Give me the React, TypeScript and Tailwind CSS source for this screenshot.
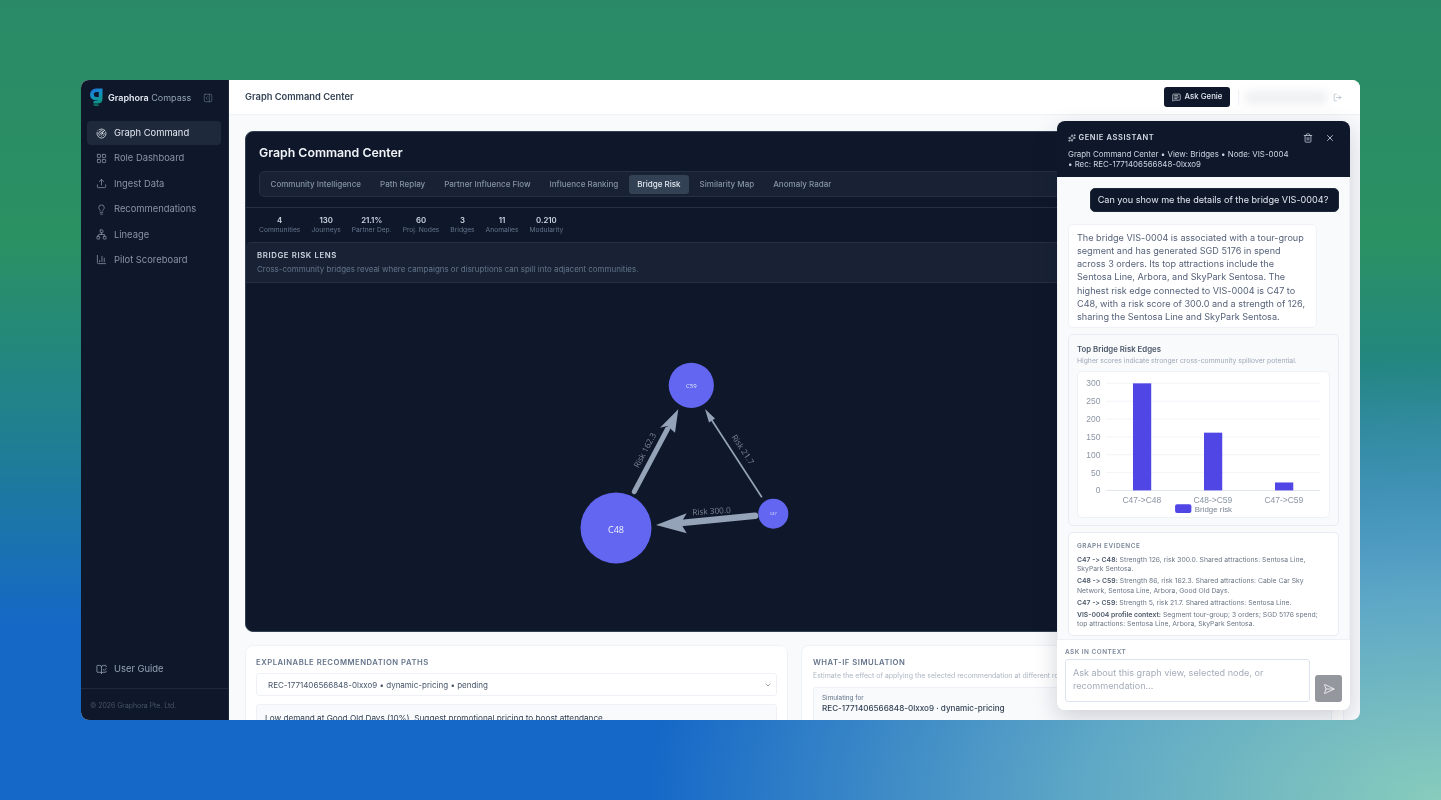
import React from "react";
import { LayoutGrid, Upload, Lightbulb, Network, ChartColumn, BookOpenCheck, PanelRightOpen, MessageSquareText, LogOut, Trash2, X, ChevronDown, SendHorizontal, Sparkles, Radar } from "lucide-react";

const nav = [
  { label: "Graph Command", Icon: Radar, active: true },
  { label: "Role Dashboard", Icon: LayoutGrid },
  { label: "Ingest Data", Icon: Upload },
  { label: "Recommendations", Icon: Lightbulb },
  { label: "Lineage", Icon: Network },
  { label: "Pilot Scoreboard", Icon: ChartColumn },
];
const tabs = ["Community Intelligence", "Path Replay", "Partner Influence Flow", "Influence Ranking", "Bridge Risk", "Similarity Map", "Anomaly Radar"];
const stats = [["4", "Communities"], ["130", "Journeys"], ["21.1%", "Partner Dep."], ["60", "Proj. Nodes"], ["3", "Bridges"], ["11", "Anomalies"], ["0.210", "Modularity"]];
const ticks = [300, 250, 200, 150, 100, 50, 0];

function Logo() {
  return (
    <svg width="13" height="19" viewBox="0 0 13 19" className="shrink-0">
      <defs>
        <linearGradient id="lg" x1="0" y1="0" x2="0.4" y2="1">
          <stop offset="0" stopColor="#1d6fe0" />
          <stop offset="0.55" stopColor="#1593c4" />
          <stop offset="1" stopColor="#0d9488" />
        </linearGradient>
      </defs>
      <path d="M6 0.500a6 6 0 1 0 0 12h3v-3.600H6.300a2.500 2.500 0 1 1 0-5H8.800V11c0 1.300-.8 2-2.200 2H3.500v2.500h4c3.200 0 5-1.700 5-4.600V.500Z" fill="url(#lg)" />
      <path d="M3 16.200h5.500v1.800H4.500Z" fill="#0f766e" />
    </svg>
  );
}

function Graph() {
  return (
    <svg viewBox="0 0 1097 348" className="w-full h-full block font-['Open_Sans',sans-serif]">
      <g fill="#94a3b8" stroke="#94a3b8" strokeLinecap="round">
        <line x1="388.300" y1="208.700" x2="421.500" y2="146" strokeWidth="5" />
        <path d="M432.300 126.300 L 429 149.700 L 421.300 143 L 414 144.700 Z" stroke="none" />
        <line x1="509" y1="232.700" x2="435" y2="240" strokeWidth="6.500" />
        <path d="M410 242 L 440.700 230.300 L 434.700 240.300 L 440.700 250.300 Z" stroke="none" />
        <line x1="515.500" y1="213.700" x2="466" y2="137.500" strokeWidth="1.700" />
        <path d="M459 126 L 469 135.500 L 463 139.500 Z" stroke="none" />
      </g>
      <circle cx="445.300" cy="102.300" r="22.600" fill="#6366f1" />
      <circle cx="370" cy="245" r="35.500" fill="#6366f1" />
      <circle cx="527.300" cy="230.700" r="15" fill="#6366f1" />
      <text x="445.300" y="104.500" textAnchor="middle" fontSize="6" fill="#e0e7ff">C59</text>
      <text x="370" y="249.500" textAnchor="middle" fontSize="9" fill="#eef2ff">C48</text>
      <text x="527.300" y="232" textAnchor="middle" fontSize="3.800" fill="#e0e7ff">C47</text>
      <g fontSize="8.200" fill="#7c8798" textAnchor="middle">
        <text transform="translate(465.700 231) rotate(-3.400)">Risk 300.0</text>
        <text transform="translate(401.500 168.700) rotate(-62)">Risk 162.3</text>
        <text transform="translate(494.500 168) rotate(57)">Risk 21.7</text>
      </g>
    </svg>
  );
}

function Chart() {
  return (
    <div className="mt-[6.500px] h-[147px] rounded-[5px] border border-[#eef2f7] bg-white relative overflow-hidden">
      <svg viewBox="0 0 253 147" className="w-full h-full block font-['Liberation_Sans',sans-serif]">
        {ticks.map((t, i) => (
          <g key={t}>
            <line x1="28" x2="245" y1={11.500 + i * 18.100} y2={11.500 + i * 18.100} stroke={t === 0 ? "#dfe5ee" : "#f1f4f8"} />
            <text x="22" y={14.500 + i * 18.100} textAnchor="end" fontSize="8.600" fill="#8b95a5">{t}</text>
          </g>
        ))}
        <rect x="55" y="11.500" width="18.500" height="108.500" fill="#4f46e5" />
        <rect x="127" y="61.500" width="18.500" height="58.500" fill="#4f46e5" />
        <rect x="199" y="112" width="18.500" height="8" fill="#4f46e5" />
        <g fontSize="8.600" fill="#8b95a5" textAnchor="middle">
          <text x="64" y="132.500">{"C47->C48"}</text>
          <text x="136" y="132.500">{"C48->C59"}</text>
          <text x="208" y="132.500">{"C47->C59"}</text>
        </g>
        <rect x="97.700" y="134" width="16.500" height="9" rx="2" fill="#4f46e5" />
        <text x="117.700" y="141.500" fontSize="8" fill="#7b8696">Bridge risk</text>
      </svg>
    </div>
  );
}

function Evidence({ head, text }: { head: string; text: string }) {
  return (
    <p className="text-[6.800px] leading-[9.500px] text-[#6b7686] mt-[2.500px]">
      <b className="font-semibold text-[#4b5768]">{head}</b> {text}
    </p>
  );
}

function GeniePanel() {
  return (
    <div className="absolute left-[976px] top-[41px] w-[293px] h-[589px] rounded-[8px] bg-white shadow-[0_8px_24px_rgba(15,23,42,0.18)] flex flex-col overflow-hidden">
      <div className="h-[56px] shrink-0 bg-[#0f172a] pl-[11px] pt-[11px] relative">
        <div className="flex items-center gap-[2.500px] text-[7.500px] font-semibold tracking-[0.6px] text-[#d5dce6] leading-[12px]">
          <Sparkles size={8} strokeWidth={2} />
          <span>GENIE ASSISTANT</span>
        </div>
        <div className="mt-[4.500px] text-[7.900px] leading-[10.500px] text-[#cbd5e1] whitespace-nowrap">
          <div>Graph Command Center • View: Bridges • Node: VIS-0004</div>
          <div>• Rec: REC-1771406566848-0lxxo9</div>
        </div>
        <Trash2 size={10} strokeWidth={1.8} className="absolute left-[246px] top-[12px] text-[#cbd5e1]" />
        <X size={10} strokeWidth={2} className="absolute left-[268px] top-[12px] text-[#cbd5e1]" />
      </div>
      <div className="flex-1 min-h-0 overflow-hidden bg-[#f8fafc] px-[11px] pt-[11px] flex flex-col border-x border-[#eef2f7]">
        <div className="self-end -mr-px h-[24px] w-[249px] shrink-0 rounded-[5px] bg-[#0f172a] border border-[#1e293b] flex items-center justify-center pr-[3px] text-[9.100px] text-[#e2e8f0]">
          Can you show me the details of the bridge VIS-0004?
        </div>
        <div className="mt-[12px] -ml-px w-[249px] h-[104px] shrink-0 rounded-[5px] bg-white border border-[#eef2f7] px-[8px] pt-[5.500px] text-[9.100px] leading-[13.300px] text-[#56627a]">
          The bridge VIS-0004 is associated with a tour-group segment and has generated SGD 5176 in spend across 3 orders. Its top attractions include the Sentosa Line, Arbora, and SkyPark Sentosa. The highest risk edge connected to VIS-0004 is C47 to C48, with a risk score of 300.0 and a strength of 126, sharing the Sentosa Line and SkyPark Sentosa.
        </div>
        <div className="mt-[6px] -ml-px h-[192px] shrink-0 rounded-[5px] border border-[#e8edf4] bg-[#f8fafc] px-[8px] pt-[9px] w-[271px]">
          <div className="text-[7.800px] leading-[10px] font-semibold text-[#4b5768]">Top Bridge Risk Edges</div>
          <div className="text-[6.800px] leading-[9px] mt-[1.500px] text-[#a0a9b8] whitespace-nowrap">Higher scores indicate stronger cross-community spillover potential.</div>
          <Chart />
        </div>
        <div className="mt-[6px] -ml-px w-[271px] h-[104px] shrink-0 rounded-[5px] border border-[#e8edf4] bg-white px-[8px] pt-[8.500px]">
          <div className="text-[6.400px] leading-[8px] font-semibold tracking-[0.5px] text-[#7a8698] mb-[5px]">GRAPH EVIDENCE</div>
          <Evidence head="C47 -> C48:" text="Strength 126, risk 300.0. Shared attractions: Sentosa Line, SkyPark Sentosa." />
          <Evidence head="C48 -> C59:" text="Strength 86, risk 162.3. Shared attractions: Cable Car Sky Network, Sentosa Line, Arbora, Good Old Days." />
          <Evidence head="C47 -> C59:" text="Strength 5, risk 21.7. Shared attractions: Sentosa Line." />
          <Evidence head="VIS-0004 profile context:" text="Segment tour-group; 3 orders; SGD 5176 spend; top attractions: Sentosa Line, Arbora, SkyPark Sentosa." />
        </div>
      </div>
      <div className="h-[71px] shrink-0 bg-white border-t border-[#eef2f7] px-[8px] pt-[8px]">
        <div className="text-[6.400px] leading-[9px] font-semibold tracking-[0.5px] text-[#7a8698]">ASK IN CONTEXT</div>
        <div className="mt-[2px] flex items-end gap-[5px]">
          <div className="w-[245px] h-[43px] rounded-[3px] border border-[#dbe3ee] bg-white px-[7px] pt-[5.500px] text-[9.100px] leading-[13.500px] text-[#a5adba]">
            Ask about this graph view, selected node, or recommendation...
          </div>
          <div className="w-[27px] h-[27px] rounded-[3px] bg-[#94979e] flex items-center justify-center text-white">
            <SendHorizontal size={12} strokeWidth={1.5} />
          </div>
        </div>
      </div>
    </div>
  );
}

export default function App() {
  return (
    <div className="w-[1441px] h-[800px] overflow-hidden relative font-['Inter',sans-serif] [font-feature-settings:'calt'_0] bg-[radial-gradient(ellipse_55%_55%_at_100%_100%,#88ccbc_0%,#5fa8c6_45%,rgba(40,120,200,0)_100%),linear-gradient(180deg,#2a8a68_0%,#2a9162_30%,#1f7f93_55%,#1668c6_78%,#1668c8_100%)] flex pl-[81px] pt-[80px]">
      <div className="w-[1279px] h-[640px] rounded-[8px] overflow-hidden flex bg-[#f8fafc] relative will-change-transform">
        <aside className="w-[148px] shrink-0 bg-[#0f172a] border-r border-[#1e293b] flex flex-col">
          <div className="h-[35px] flex items-center pl-[9px] pr-[15px] shrink-0">
            <Logo />
            <span className="ml-[5px] text-[9px] font-semibold text-[#e2e8f0]">Graphora</span>
            <span className="ml-[2.500px] text-[9px] text-[#94a3b8]">Compass</span>
            <PanelRightOpen size={10} strokeWidth={1.5} className="ml-auto text-[#64748b]" />
          </div>
          <nav className="pl-[6px] pr-[7px] pt-[6px] flex flex-col gap-[1.400px]">
            {nav.map(({ label, Icon, active }) => (
              <div key={label} className={`h-[24px] rounded-[4px] flex items-center pl-[9px] gap-[7px] text-[9.400px] ${active ? "bg-[#1e293b] text-[#e2e8f0]" : "text-[#8a94a6]"}`}>
                <Icon size={11} strokeWidth={1.7} />
                <span>{label}</span>
              </div>
            ))}
          </nav>
          <div className="mt-auto">
            <div className="h-[24px] mx-[6px] mb-[7px] flex items-center pl-[9px] gap-[7px] text-[9.400px] text-[#94a3b8]">
              <BookOpenCheck size={11} strokeWidth={1.7} />
              <span>User Guide</span>
            </div>
            <div className="h-[32px] border-t border-[#1e293b] pl-[9px] pt-[4px] flex items-center text-[6.900px] text-[#475569]">© 2026 Graphora Pte. Ltd.</div>
          </div>
        </aside>
        <div className="flex-1 min-w-0 flex flex-col">
          <header className="h-[35px] shrink-0 bg-white border-b border-[#eef2f7] flex items-center pl-[16px] pr-[18px]">
            <span className="text-[9.300px] font-semibold text-[#334155]">Graph Command Center</span>
            <div className="ml-auto flex items-center">
              <div className="h-[20px] w-[66px] rounded-[3px] bg-[#0f172a] flex items-center justify-center gap-[4px] text-[7.800px] font-medium text-[#e2e8f0]">
                <MessageSquareText size={9} strokeWidth={1.8} />
                Ask Genie
              </div>
              <div className="w-px h-[15px] bg-[#eef2f7] ml-[8px]" />
              <div className="ml-[6px] w-[82px] h-[13px] rounded-[3px] bg-[#eff0f2] blur-[4px]" />
              <LogOut size={9} strokeWidth={1.5} className="ml-[6px] text-[#94a3b8]" />
            </div>
          </header>
          <main className="flex-1 min-h-0 overflow-hidden px-[16px] pt-[16px]">
            <section className="h-[501px] rounded-[8px] bg-[#0f172a] border border-[#334155] flex flex-col overflow-hidden">
              <div className="h-[76px] shrink-0 px-[13px] pt-[12px] border-b border-[#243044]">
                <div className="text-[12.300px] leading-[18px] font-semibold text-[#f1f5f9]">Graph Command Center</div>
                <div className="mt-[9px] h-[26px] rounded-[5px] border border-[#243044] bg-[#182234] flex items-center px-[2px] gap-[2px]">
                  {tabs.map((t) => (
                    <div key={t} className={`h-[19px] px-[8.500px] rounded-[3px] flex items-center text-[8.030px] font-medium ${t === "Bridge Risk" ? "bg-[#334155] text-[#e2e8f0]" : "text-[#8592a6]"}`}>{t}</div>
                  ))}
                </div>
              </div>
              <div className="h-[34px] shrink-0 flex items-center pl-[13px] gap-[11px]">
                {stats.map(([v, l]) => (
                  <div key={l} className="flex flex-col items-center">
                    <span className="text-[7.800px] leading-[10px] font-semibold text-[#cbd5e1]">{v}</span>
                    <span className="text-[6.700px] leading-[9px] mt-[1.500px] text-[#64748b]">{l}</span>
                  </div>
                ))}
              </div>
              <div className="h-[41px] shrink-0 bg-[#182234] border-y border-[#243044] rounded-t-[5px] px-[11px] pt-[7px]">
                <div className="text-[7.800px] leading-[11px] font-semibold tracking-[0.6px] text-[#cbd5e1]">BRIDGE RISK LENS</div>
                <div className="text-[7.950px] leading-[11px] mt-[3px] text-[#64748b]">Cross-community bridges reveal where campaigns or disruptions can spill into adjacent communities.</div>
              </div>
              <div className="flex-1 min-h-0"><Graph /></div>
            </section>
            <div className="mt-[13px] flex gap-[13px]">
              <section className="w-[543px] h-[120px] shrink-0 rounded-[8px] bg-white border border-[#eef2f7] px-[10px] pt-[11px]">
                <div className="text-[7.700px] leading-[11px] font-semibold tracking-[0.5px] text-[#64748b]">EXPLAINABLE RECOMMENDATION PATHS</div>
                <div className="mt-[5px] h-[23px] rounded-[3px] border border-[#eef2f7] flex items-center pl-[11px] pr-[4px] text-[8px] text-[#475569]">
                  REC-1771406566848-0lxxo9 • dynamic-pricing • pending
                  <ChevronDown size={8} className="ml-auto text-[#64748b]" />
                </div>
                <div className="mt-[8px] h-[40px] rounded-[3px] bg-[#f8fafc] border border-[#eef2f7] px-[8px] pt-[8px] text-[8.200px] leading-[11px] text-[#334155]">
                  Low demand at Good Old Days (10%). Suggest promotional pricing to boost attendance.
                </div>
              </section>
              <section className="flex-1 h-[120px] min-w-0 rounded-[8px] bg-white border border-[#eef2f7] px-[11px] pt-[11px] overflow-hidden">
                <div className="text-[7.700px] leading-[11px] font-semibold tracking-[0.5px] text-[#64748b]">WHAT-IF SIMULATION</div>
                <div className="text-[6.950px] leading-[9px] mt-[3px] text-[#adb6c3] whitespace-nowrap">Estimate the effect of applying the selected recommendation at different rollout levels.</div>
                <div className="mt-[7px] h-[36px] rounded-[3px] bg-[#f8fafc] border border-[#eef2f7] px-[8px] pt-[6px]">
                  <div className="text-[6.400px] leading-[9px] text-[#64748b]">Simulating for</div>
                  <div className="text-[8.100px] leading-[11px] font-medium text-[#334155]">REC-1771406566848-0lxxo9 · dynamic-pricing</div>
                </div>
              </section>
            </div>
          </main>
        </div>
        <GeniePanel />
      </div>
    </div>
  );
}
